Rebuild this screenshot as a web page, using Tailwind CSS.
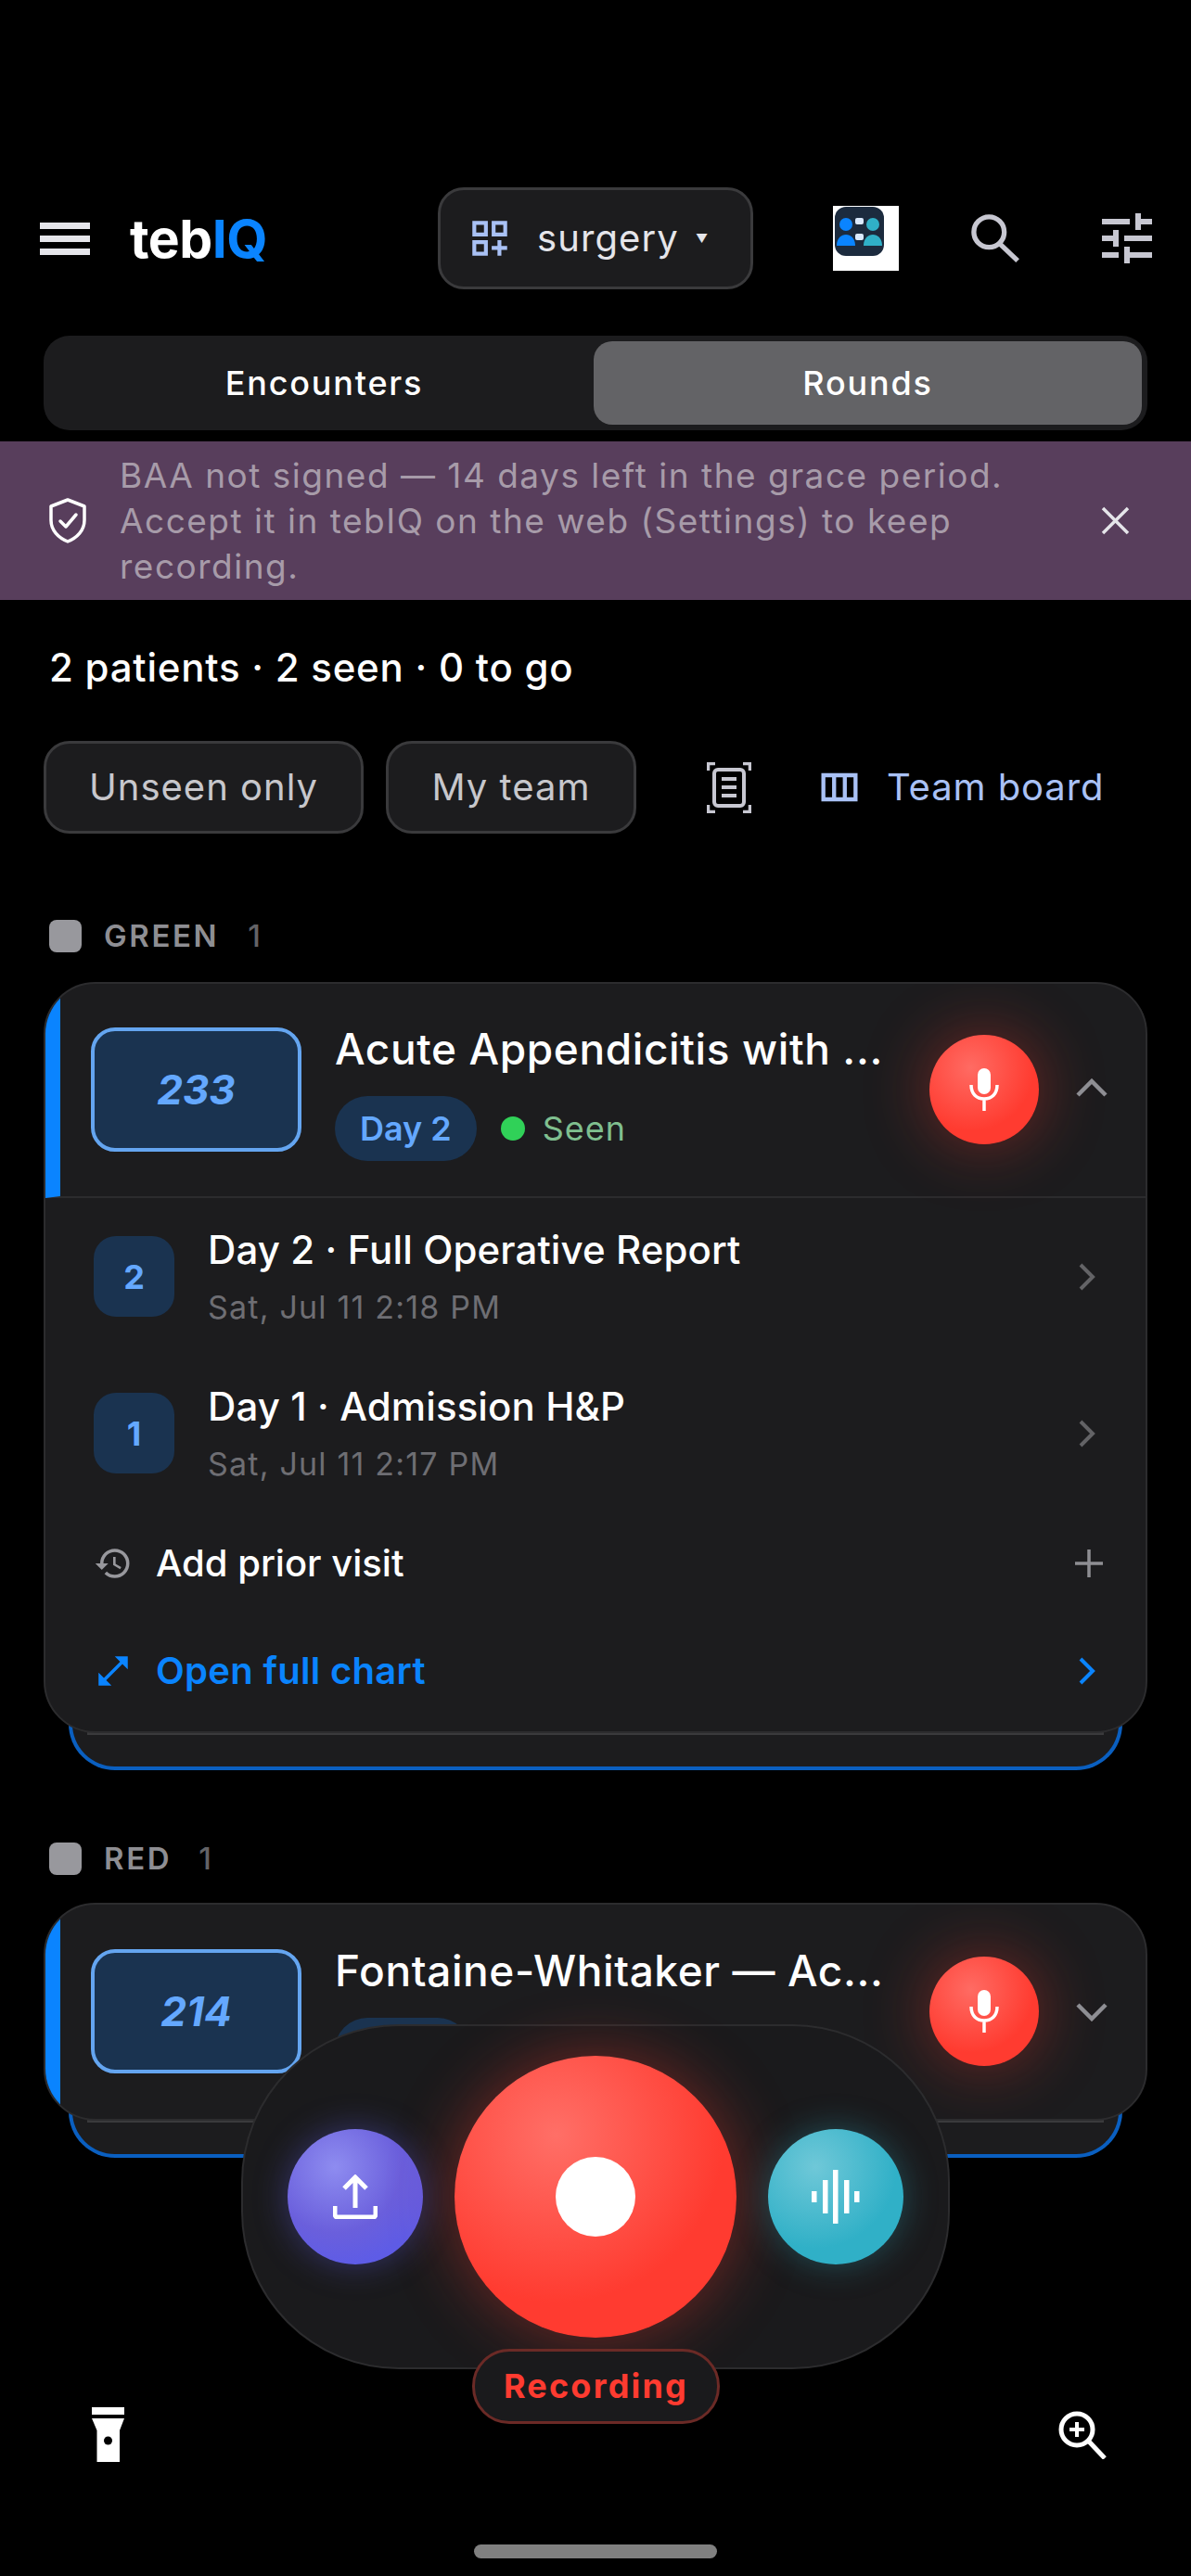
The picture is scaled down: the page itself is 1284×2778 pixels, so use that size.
<!DOCTYPE html>
<html lang="en">
<head>
    <meta charset="UTF-8">
    <meta name="viewport" content="width=device-width, initial-scale=1.0">
    <title>tebIQ Rounds</title>
    <script src="https://cdn.jsdelivr.net/npm/@tailwindcss/browser@4"></script>
</head>
<body class="bg-black">
<div class="relative w-[1284px] h-[2778px] overflow-hidden bg-black text-white [font-family:Inter,sans-serif]">

    <!-- top bar -->
    <header class="flex items-center h-[110px] mt-[202px]">
        <div class="flex items-center w-[472px] pl-[43px]">
            <div class="flex flex-col gap-[7px] w-[54px]">
                <span class="h-[7px] bg-[#e5e5ea]"></span>
                <span class="h-[7px] bg-[#e5e5ea]"></span>
                <span class="h-[7px] bg-[#e5e5ea]"></span>
            </div>
            <div class="ml-[43px] text-[57px] leading-none font-bold tracking-[-0.5px]">teb<span class="text-[#0a84ff]">IQ</span></div>
        </div>
        <button class="flex items-center w-[340px] h-[110px] rounded-[28px] bg-[#1c1c1e] border-[3px] border-[#3a3a3c] pl-[28px]">
            <svg class="w-[50px] h-[50px] text-[#a9c1f5]" viewBox="0 0 24 24" fill="currentColor"><path d="M3 11h8V3H3v8zm2-6h4v4H5V5zm8-2v8h8V3h-8zm6 6h-4V5h4v4zM3 21h8v-8H3v8zm2-6h4v4H5v-4zm13-2h-2v3h-3v2h3v3h2v-3h3v-2h-3z"/></svg>
            <span class="ml-[26px] text-[40px] leading-none tracking-[1.1px] text-[#e5e5ea]">surgery</span>
            <span class="ml-[18px] text-[13px] leading-none text-[#e5e5ea]">▼</span>
        </button>
        <svg class="ml-[86px] w-[71px] h-[70px]" viewBox="0 0 71 70">
            <rect width="71" height="70" fill="#fff"/>
            <rect x="2" y="1" width="53" height="53" rx="12" fill="#1c2b3e"/>
            <circle cx="14" cy="20" r="7" fill="#0a84ff"/>
            <circle cx="43" cy="20" r="7" fill="#30b0c7"/>
            <path d="M4 43c0-8 5-12 10-12s10 4 10 12z" fill="#0a84ff"/>
            <path d="M33 43c0-8 5-12 10-12s10 4 10 12z" fill="#30b0c7"/>
            <rect x="24" y="13" width="9" height="7" rx="2" fill="#dbeafe"/>
            <rect x="24" y="30" width="9" height="7" rx="2" fill="#dbeafe"/>
        </svg>
        <svg class="ml-[78px] w-[53px] h-[53px] text-[#c7c7d1]" viewBox="0 0 55 55" fill="none" stroke="currentColor" stroke-width="5.5">
            <circle cx="20" cy="20" r="17"/>
            <path d="M32 33l20 19"/>
        </svg>
        <svg class="ml-[79px] w-[72px] h-[72px] text-[#c7c7d1]" viewBox="0 0 24 24" fill="currentColor"><path d="M3 17v2h6v-2H3zM3 5v2h10V5H3zm10 16v-2h8v-2h-8v-2h-2v6h2zM7 9v2H3v2h4v2h2V9H7zm14 4v-2H11v2h10zm-6-4h2V7h4V5h-4V3h-2v6z"/></svg>
    </header>

    <!-- encounters / rounds switch -->
    <div class="flex mt-[50px] mx-[47px] h-[102px] rounded-[28px] bg-[#1c1c1e] p-[6px] pl-0 items-stretch">
        <div class="flex items-center justify-center w-[593px] pl-[12px] text-[36px] font-medium tracking-[1.8px]">Encounters</div>
        <div class="flex items-center justify-center flex-1 rounded-[20px] bg-[#636366] text-[36px] font-medium tracking-[1.8px]">Rounds</div>
    </div>

    <!-- BAA banner -->
    <div class="flex items-center mt-[12px] h-[171px] bg-[#583e5c]">
        <svg class="ml-[53px] w-[40px] h-[49px] shrink-0" viewBox="0 0 40 49" fill="none" stroke="#fff" stroke-width="3.5" stroke-linejoin="round" stroke-linecap="round">
            <path d="M20 2L38 9v15c0 11-8 19-18 23C10 43 2 35 2 24V9z"/>
            <path d="M12 25l6 6 11-13"/>
        </svg>
        <p class="ml-[36px] w-[1010px] text-[37px] leading-[49px] tracking-[1.5px] text-[#a79ba9]">BAA not signed — 14 days left in the grace period. Accept it in tebIQ on the web (Settings) to keep recording.</p>
        <svg class="ml-[48px] w-[31px] h-[31px]" viewBox="0 0 31 31" stroke="#e5e5ea" stroke-width="3.5"><path d="M2 2l27 27M29 2L2 29"/></svg>
    </div>

    <!-- summary -->
    <p class="mt-[50px] ml-[53px] text-[42px] leading-[46px] font-medium tracking-[0.76px]">2 patients · 2 seen · 0 to go</p>

    <!-- filters -->
    <div class="flex items-center mt-[56px] ml-[47px] h-[100px]">
        <button class="h-full w-[345px] rounded-[28px] bg-[#1c1c1e] border-[3px] border-[#3a3a3c] text-[40px] tracking-[1px] text-[#c7c7cc]">Unseen only</button>
        <button class="h-full w-[270px] ml-[24px] rounded-[28px] bg-[#1c1c1e] border-[3px] border-[#3a3a3c] text-[40px] tracking-[1px] text-[#c7c7cc]">My team</button>
        <svg class="ml-[76px] w-[48px] h-[55px] text-[#c7c7d1]" viewBox="0 0 48 55" fill="none" stroke="currentColor">
            <path d="M1.5 9V1.5H9M39 1.5h7.500V9M1.500 46v7.500H9M39 53.500h7.500V46" stroke-width="3.500"/>
            <rect x="8" y="8" width="32" height="39" rx="4" stroke-width="4"/>
            <path d="M16 18h16M16 27h16M16 36h16" stroke-width="4"/>
        </svg>
        <svg class="ml-[69px] w-[52px] h-[52px] text-[#a9c1f5]" viewBox="0 0 24 24" fill="currentColor"><path d="M3 5v14h18V5H3zm5.330 12H5V7h3.330v10zm5.340 0h-3.330V7h3.330v10zM19 17h-3.330V7H19v10z"/></svg>
        <span class="ml-[25px] text-[40px] tracking-[0.9px] text-[#a9c1f5]">Team board</span>
    </div>

    <!-- GREEN -->
    <div class="flex items-center mt-[93px] ml-[53px] h-[35px]">
        <span class="w-[35px] h-[35px] rounded-[8px] bg-[#98989d]"></span>
        <span class="ml-[24px] text-[33px] font-semibold tracking-[2.6px] text-[#8e8e93]">GREEN</span>
        <span class="ml-[31px] text-[33px] font-medium text-[#636366]">1</span>
    </div>

    <div class="relative mt-[32px] mx-[47px]">
        <div class="absolute left-[27px] right-[27px] bottom-[-40px] h-[120px] rounded-b-[50px] bg-[#1c1c1e] border-b-[4px] border-x-[4px] border-[#0a5fc0]">
            <div class="absolute left-[16px] right-[16px] bottom-[34px] h-[3px] bg-[#3a3a3c]"></div>
        </div>
        <article class="relative rounded-[56px] bg-[#1c1c1e] border-2 border-[#2c2c2e] overflow-hidden">
            <div class="flex items-center h-[231px] border-b-2 border-[#2c2c2e] border-l-[16px] border-l-[#0a84ff]">
                <div class="flex items-center justify-center ml-[33px] mb-[2px] w-[227px] h-[134px] shrink-0 rounded-[26px] bg-[#1a3350] border-[4px] border-[#64a5f0] text-[44px] font-bold italic text-[#64a8ff]">233</div>
                <div class="ml-[36px] w-[641px] shrink-0 pt-[5px]">
                    <div class="text-[46px] leading-[54px] font-medium tracking-[0.6px]">Acute Appendicitis with ...</div>
                    <div class="flex items-center mt-[24px]">
                        <span class="flex items-center h-[70px] px-[27px] rounded-full bg-[#1a3350] text-[36px] font-semibold text-[#64a8ff]">Day 2</span>
                        <span class="ml-[26px] w-[26px] h-[26px] rounded-full bg-[#30d158]"></span>
                        <span class="ml-[19px] text-[36px] tracking-[1px] text-[#7fbf8f]">Seen</span>
                    </div>
                </div>
                <button class="flex items-center justify-center mb-[2px] w-[118px] h-[118px] shrink-0 rounded-full bg-[radial-gradient(circle_at_38%_30%,#ff6b63,#ff3b30_62%)] shadow-[0_0_70px_rgba(255,59,48,0.4)]">
                    <svg class="w-[34px] h-[47px]" viewBox="0 0 34 47" fill="none" stroke="#fff" stroke-width="3.500"><rect x="10" y="1" width="14" height="28" rx="7" fill="#fff" stroke="none"/><path d="M3 19c0 10 6 15 14 15s14-5 14-15M17 34v13"/></svg>
                </button>
                <svg class="ml-[40px] mb-[5px] w-[34px] h-[20px]" viewBox="0 0 34 20" fill="none" stroke="#8e8e93" stroke-width="4.500"><path d="M2 18L17 3l15 15"/></svg>
            </div>
            <div class="flex items-center h-[169px] pl-[52px]">
                <span class="flex items-center justify-center w-[87px] h-[87px] rounded-[24px] bg-[#1a3350] text-[36px] font-bold text-[#64a8ff]">2</span>
                <div class="ml-[36px] flex-1">
                    <div class="text-[42px] leading-[48px] font-medium tracking-[0.1px]">Day 2 · Full Operative Report</div>
                    <div class="mt-[18px] text-[34px] leading-[40px] tracking-[1.2px] text-[#6e6e73]">Sat, Jul 11 2:18 PM</div>
                </div>
                <svg class="mr-[54px] w-[18px] h-[30px]" viewBox="0 0 18 30" fill="none" stroke="#636366" stroke-width="4"><path d="M2 2l13 13L2 28"/></svg>
            </div>
            <div class="flex items-center h-[169px] pl-[52px]">
                <span class="flex items-center justify-center w-[87px] h-[87px] rounded-[24px] bg-[#1a3350] text-[36px] font-bold text-[#64a8ff]">1</span>
                <div class="ml-[36px] flex-1">
                    <div class="text-[42px] leading-[48px] font-medium tracking-[0.1px]">Day 1 · Admission H&amp;P</div>
                    <div class="mt-[18px] text-[34px] leading-[40px] tracking-[1.2px] text-[#6e6e73]">Sat, Jul 11 2:17 PM</div>
                </div>
                <svg class="mr-[54px] w-[18px] h-[30px]" viewBox="0 0 18 30" fill="none" stroke="#636366" stroke-width="4"><path d="M2 2l13 13L2 28"/></svg>
            </div>
            <div class="flex items-center h-[112px] pl-[52px]">
                <svg class="w-[42px] h-[42px] text-[#98989d]" viewBox="0 0 24 24" fill="currentColor"><path d="M13 3a9 9 0 0 0-9 9H1l3.890 3.890.070.140L9 12H6c0-3.870 3.130-7 7-7s7 3.130 7 7-3.130 7-7 7c-1.930 0-3.680-.790-4.940-2.060l-1.420 1.420A8.954 8.954 0 0 0 13 21a9 9 0 0 0 0-18zm-1 5v5l4.280 2.540.720-1.210-3.500-2.080V8H12z"/></svg>
                <span class="ml-[25px] flex-1 text-[40px] font-medium">Add prior visit</span>
                <svg class="mr-[46px] w-[30px] h-[30px]" viewBox="0 0 30 30" stroke="#8e8e93" stroke-width="3.500"><path d="M15 0v30M0 15h30"/></svg>
            </div>
            <div class="flex items-center h-[125px] pb-[5px] pl-[52px]">
                <svg class="w-[42px] h-[42px] text-[#0a84ff]" viewBox="0 0 24 24" fill="currentColor"><path d="M21 11V3h-8l3.290 3.290-10 10L3 13v8h8l-3.290-3.290 10-10z"/></svg>
                <span class="ml-[25px] flex-1 text-[40px] font-semibold tracking-[0.3px] text-[#0a84ff]">Open full chart</span>
                <svg class="mr-[54px] w-[18px] h-[30px]" viewBox="0 0 18 30" fill="none" stroke="#0a84ff" stroke-width="4"><path d="M2 2l13 13L2 28"/></svg>
            </div>
        </article>
    </div>

    <!-- RED -->
    <div class="flex items-center mt-[118px] ml-[53px] h-[35px]">
        <span class="w-[35px] h-[35px] rounded-[8px] bg-[#98989d]"></span>
        <span class="ml-[24px] text-[33px] font-semibold tracking-[2.6px] text-[#8e8e93]">RED</span>
        <span class="ml-[29px] text-[33px] font-medium text-[#636366]">1</span>
    </div>

    <div class="relative mt-[30px] mx-[47px]">
        <div class="absolute left-[27px] right-[27px] bottom-[-40px] h-[120px] rounded-b-[50px] bg-[#1c1c1e] border-b-[4px] border-x-[4px] border-[#0a5fc0]">
            <div class="absolute left-[16px] right-[16px] bottom-[34px] h-[3px] bg-[#3a3a3c]"></div>
        </div>
        <article class="relative rounded-[56px] bg-[#1c1c1e] border-2 border-[#2c2c2e] overflow-hidden">
            <div class="flex items-center h-[231px] border-l-[16px] border-l-[#0a84ff]">
                <div class="flex items-center justify-center ml-[33px] mb-[2px] w-[227px] h-[134px] shrink-0 rounded-[26px] bg-[#1a3350] border-[4px] border-[#64a5f0] text-[44px] font-bold italic text-[#64a8ff]">214</div>
                <div class="ml-[36px] w-[641px] shrink-0 pt-[5px]">
                    <div class="text-[46px] leading-[54px] font-medium tracking-[0.6px]">Fontaine-Whitaker — Ac...</div>
                    <div class="flex items-center mt-[24px]">
                        <span class="flex items-center h-[70px] px-[27px] rounded-full bg-[#1a3350] text-[36px] font-semibold text-[#64a8ff]">Day 1</span>
                    </div>
                </div>
                <button class="flex items-center justify-center mb-[2px] w-[118px] h-[118px] shrink-0 rounded-full bg-[radial-gradient(circle_at_38%_30%,#ff6b63,#ff3b30_62%)] shadow-[0_0_70px_rgba(255,59,48,0.4)]">
                    <svg class="w-[34px] h-[47px]" viewBox="0 0 34 47" fill="none" stroke="#fff" stroke-width="3.500"><rect x="10" y="1" width="14" height="28" rx="7" fill="#fff" stroke="none"/><path d="M3 19c0 10 6 15 14 15s14-5 14-15M17 34v13"/></svg>
                </button>
                <svg class="ml-[40px] w-[34px] h-[20px]" viewBox="0 0 34 20" fill="none" stroke="#8e8e93" stroke-width="4.500"><path d="M2 2l15 15L32 2"/></svg>
            </div>
        </article>
    </div>

    <!-- floating record dock -->
    <div class="absolute left-[260px] top-[2183px] w-[764px] h-[372px] rounded-[170px] bg-[#1a1a1c] border-2 border-[#2c2c2e] flex items-center pl-[48px]">
        <button class="flex items-center justify-center w-[146px] h-[146px] rounded-full bg-[radial-gradient(circle_at_35%_28%,#8e8cf0,#6a5fdc_50%,#5e5ce6_75%)] shadow-[0_0_36px_rgba(94,92,230,0.4)]">
            <svg class="w-[48px] h-[48px]" viewBox="0 0 48 48" fill="none" stroke="#fff" stroke-width="5"><path d="M24 36V4M12 15L24 3l12 12" stroke-linejoin="miter"/><path d="M2 34v9a3 3 0 0 0 3 3h38a3 3 0 0 0 3-3v-9"/></svg>
        </button>
        <button class="flex items-center justify-center ml-[34px] w-[304px] h-[304px] rounded-full bg-[radial-gradient(circle_at_36%_28%,#ff6f67,#ff3b30_62%)] shadow-[0_0_70px_rgba(255,59,48,0.4)]">
            <span class="w-[86px] h-[86px] rounded-full bg-white"></span>
        </button>
        <button class="flex items-center justify-center ml-[34px] w-[146px] h-[146px] rounded-full bg-[radial-gradient(circle_at_35%_28%,#6fc8d8,#30b0c7_62%)] shadow-[0_0_36px_rgba(48,176,199,0.35)]">
            <svg class="w-[52px] h-[58px]" viewBox="0 0 52 58" fill="#fff"><rect x="0" y="23" width="5.500" height="12"/><rect x="12" y="11" width="5.500" height="36"/><rect x="23" y="0" width="5.500" height="58"/><rect x="35" y="11" width="5.500" height="36"/><rect x="46" y="23" width="5.500" height="12"/></svg>
        </button>
    </div>
    <div class="absolute left-[509px] top-[2533px] flex items-center justify-center w-[267px] h-[81px] pb-[2px] rounded-[40px] bg-[#1a1a1c] border-[3px] border-[#6b2a26] text-[36px] font-bold tracking-[2.2px] text-[#ff3b30]">Recording</div>

    <!-- corner tools -->
    <svg class="absolute left-[98px] top-[2596px] w-[37px] h-[59px]" viewBox="0 0 37 59" fill="#fff"><rect x="1" y="0" width="35" height="8"/><path d="M1 12h35l-5 13v34H6.500V25z"/><circle cx="18.500" cy="36" r="4.500" fill="#000"/></svg>
    <svg class="absolute left-[1141px] top-[2600px] w-[52px] h-[52px]" viewBox="0 0 52 52" fill="none" stroke="#fff" stroke-width="5"><circle cx="20" cy="20" r="17"/><path d="M33 33l17 18"/><path d="M20 12v16M12 20h16" stroke-width="4"/></svg>

    <!-- home indicator -->
    <div class="absolute left-[511px] top-[2744px] w-[262px] h-[15px] rounded-full bg-[#808080]"></div>
</div>
</body>
</html>
